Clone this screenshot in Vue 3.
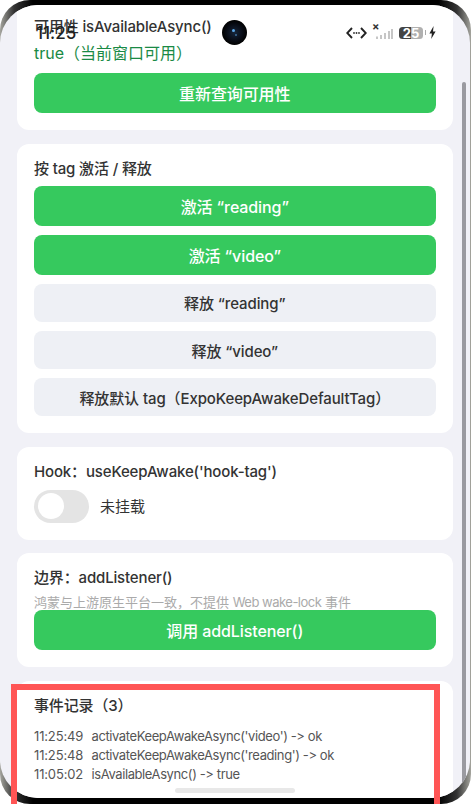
<script setup>
const green = ['激活 “reading”', '激活 “video”']
const gray = ['释放 “reading”', '释放 “video”', '释放默认 tag（ExpoKeepAwakeDefaultTag）']
const logs = [
  ['11:25:49', "activateKeepAwakeAsync('video') -> ok"],
  ['11:25:48', "activateKeepAwakeAsync('reading') -> ok"],
  ['11:05:02', 'isAvailableAsync() -> true'],
]
</script>

<template>
  <div class="shot">
    <div class="device">
      <div class="screen">
        <main class="scroll">
          <section class="card first">
            <h2 class="title">可用性 isAvailableAsync()</h2>
            <p class="ok">true（当前窗口可用）</p>
            <button class="btn primary">重新查询可用性</button>
          </section>

          <section class="card">
            <h2 class="title">按 tag 激活 / 释放</h2>
            <div class="stack">
              <button v-for="t in green" :key="t" class="btn primary">{{ t }}</button>
              <button v-for="t in gray" :key="t" class="btn secondary">{{ t }}</button>
            </div>
          </section>

          <section class="card">
            <h2 class="title">Hook：useKeepAwake('hook-tag')</h2>
            <div class="switch-row">
              <span class="switch"><span class="thumb"></span></span>
              <span class="switch-label">未挂载</span>
            </div>
          </section>

          <section class="card">
            <h2 class="title">边界：addListener()</h2>
            <p class="hint">鸿蒙与上游原生平台一致，不提供 <span class="latin">Web wake-lock</span> 事件</p>
            <button class="btn primary">调用 addListener()</button>
          </section>

          <section class="card last">
            <h2 class="title">事件记录（3）</h2>
            <ul class="logs">
              <li v-for="l in logs" :key="l[0]"><span class="time">{{ l[0] }}</span>{{ l[1] }}</li>
            </ul>
          </section>
        </main>

        <div class="scrollbar"></div>
        <div class="home"></div>
      </div>
    </div>

    <div class="status">
      <span class="clock">11:25</span>
      <span class="camera"><i></i><b></b></span>
      <div class="icons">
        <svg class="dev" width="21" height="12" viewBox="0 0 21 12">
          <path d="M6 1 1.2 6 6 11M15 1 19.8 6 15 11" fill="none" stroke="#222" stroke-width="1.9" />
          <circle cx="8" cy="6" r=".9" fill="#333" /><circle cx="10.5" cy="6" r=".9" fill="#333" /><circle cx="13" cy="6" r=".9" fill="#333" />
        </svg>
        <span class="signal">
          <span class="x">×</span>
          <svg width="18" height="10" viewBox="0 0 18 10">
            <rect x="1" y="7.5" width="2" height="2.5" /><rect x="5" y="6" width="2" height="4" />
            <rect x="9" y="4" width="2" height="6" /><rect x="13" y="2" width="2" height="8" /><rect x="16" y="0" width="2" height="10" />
          </svg>
        </span>
        <span class="battery"><span class="level">25</span></span>
        <span class="nub"></span>
        <svg class="bolt" width="7" height="13" viewBox="0 0 7 13"><path d="M4.6 0 .4 7.4h2.5L2.2 13l4.4-7.6H4z" fill="#222" /></svg>
      </div>
    </div>

    <div class="highlight"></div>
  </div>
</template>

<style>
html, body { margin: 0; background: #fff; }
</style>

<style scoped>
.shot {
  position: relative;
  width: 471px;
  height: 804px;
  overflow: hidden;
  background: #fff;
  font-family: Inter, "Noto Sans CJK SC", sans-serif;
  font-variant-ligatures: none;
  font-feature-settings: "calt" 0;
  text-spacing-trim: space-all;
}
.device {
  box-sizing: border-box;
  height: 804px;
  padding: 5px 1.5px 5.7px 0;
  border-radius: 30px;
  background: linear-gradient(90deg, #a5a59e, #333 3%, #000 7%, #000 93%, #333 97%, #a5a59e);
}
.screen {
  position: relative;
  height: 100%;
  overflow: hidden;
  border-radius: 38px;
  background: #f1f1f7;
}
.scroll {
  display: flex;
  flex-direction: column;
  gap: 13.4px;
  padding: 0 17px;
}
.card {
  padding: 15.5px 17px 17px;
  border-radius: 12px;
  background: #fff;
}
.first {
  padding-top: 12px;
  border-radius: 0 0 12px 12px;
}
.title {
  margin: 0;
  font-size: 15px;
  line-height: 20px;
  font-weight: 500;
  letter-spacing: -0.15px;
  color: #333;
}
.ok {
  margin: 6.3px 0 10px;
  font-size: 16px;
  line-height: 20px;
  color: #1a8a45;
}
.btn {
  display: block;
  width: 100%;
  height: 40px;
  padding: 0;
  border: 0;
  border-radius: 8px;
  font: inherit;
  font-size: 16px;
  font-weight: 500;
  letter-spacing: -0.1px;
}
.primary { background: #36c95e; color: #fff; }
.secondary { height: 38.5px; background: #eef0f5; color: #333; font-size: 15px; }
.stack {
  display: flex;
  flex-direction: column;
  gap: 8.6px;
  margin-top: 7.3px;
}
.switch-row {
  display: flex;
  align-items: center;
  gap: 11px;
  margin-top: 7.3px;
}
.switch {
  display: flex;
  align-items: center;
  box-sizing: border-box;
  width: 55px;
  height: 33px;
  padding: 0 3.5px;
  border-radius: 17px;
  background: #e4e4e4;
}
.thumb {
  width: 26.5px;
  height: 26.5px;
  border-radius: 50%;
  background: #fff;
}
.switch-label { margin-top: -1.5px; font-size: 15px; color: #333; }
.hint {
  margin: 6px 0 0;
  font-size: 13px;
  line-height: 16px;
  color: #aaa;
}
.latin { letter-spacing: -0.5px; }
.logs {
  margin: 10.5px 0 0;
  padding: 0;
  list-style: none;
  font-size: 13px;
  line-height: 19px;
  letter-spacing: -0.4px;
  color: #555;
}
.time { display: inline-block; width: 57.5px; letter-spacing: -0.15px; }
.last { height: 200px; }
.scrollbar {
  position: absolute;
  top: 77px;
  left: 461.5px;
  width: 4.5px;
  height: 708px;
  border-radius: 2px;
  background: #9a9aa0;
}
.home {
  position: absolute;
  left: 175px;
  bottom: 5.5px;
  width: 120px;
  height: 5px;
  border-radius: 3px;
  background: #e8e8e8;
}
.status {
  position: absolute;
  inset: 0 0 auto 0;
  height: 64px;
  pointer-events: none;
}
.clock {
  position: absolute;
  left: 36px;
  top: 23px;
  font-size: 17px;
  line-height: 20px;
  font-weight: 500;
  color: #222;
}
.camera {
  position: absolute;
  left: 222px;
  top: 20px;
  width: 25px;
  height: 25px;
  border-radius: 50%;
  background: radial-gradient(circle at 50% 50%, #16263c 0, #0a0f1a 40%, #000 70%);
}
.camera i, .camera b {
  position: absolute;
  border-radius: 50%;
  background: #5ba8e8;
}
.camera i { left: 10px; top: 9px; width: 3px; height: 3px; }
.camera b { left: 13px; top: 14px; width: 2px; height: 2px; opacity: .6; }
.icons {
  position: absolute;
  left: 346px;
  top: 25px;
  display: flex;
  align-items: center;
  height: 15px;
}
.signal {
  position: relative;
  display: block;
  width: 18px;
  height: 10px;
  margin: 3px 0 0 8px;
}
.signal svg { display: block; fill: #c6c6c6; }
.x {
  position: absolute;
  left: -3px;
  top: -8px;
  font-size: 11px;
  line-height: 10px;
  font-weight: 700;
  color: #333;
}
.battery {
  display: flex;
  align-items: center;
  justify-content: center;
  width: 24px;
  height: 12px;
  margin-left: 6px;
  border-radius: 3.5px;
  background: linear-gradient(90deg, #444 50%, #b0b0b0 50%);
}
.level {
  font-size: 13px;
  line-height: 12px;
  font-weight: 700;
  color: #fff;
}
.nub {
  width: 1.5px;
  height: 5px;
  margin-left: 1.5px;
  background: #aaa;
}
.bolt { margin-left: 3px; }
.highlight {
  position: absolute;
  left: 11px;
  top: 684px;
  box-sizing: border-box;
  width: 429px;
  height: 140px;
  border: 6px solid #ff5555;
}
</style>
